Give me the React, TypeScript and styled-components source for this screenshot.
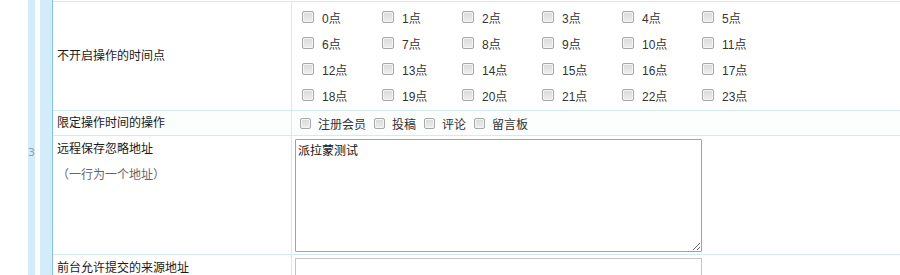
import styled, { createGlobalStyle } from "styled-components";

const GlobalStyle = createGlobalStyle`
	html, body {
		margin: 0;
		padding: 0;
		background: #fff;
	}
	body {
		font-family: "Liberation Sans", "Noto Sans CJK SC", sans-serif;
		font-size: 12px;
		color: #222;
	}
`;

const Page = styled.div`
	min-height: 100vh;
	padding-top: 1px;
	box-sizing: border-box;
	background: linear-gradient(
		to right,
		#fff 0 28px,
		#d3ecf9 28px 35px,
		#fff 35px 40px,
		#d3ecf9 40px 52px,
		#86c4e3 52px 53px,
		#fff 53px
	);
`;

const Table = styled.div`
	border-top: 1px solid #d3e9f3;
	margin-left: 53px;
`;

const Row = styled.div<{ $shade?: boolean; $height?: number }>`
	position: relative;
	display: grid;
	grid-template-columns: 239px 1fr;
	border-bottom: 1px solid #d3e9f3;
	background: ${(p) => (p.$shade ? "#fcfdfd" : "#fff")};
	${(p) => (p.$height ? `height: ${p.$height}px;` : "")}
`;

const LineNo = styled.span`
	position: absolute;
	left: -25px;
	top: 10px;
	font-size: 11px;
	color: #7ba6bd;
	font-family: "DejaVu Sans", sans-serif;
`;

const Label = styled.div<{ $top?: boolean }>`
	border-right: 1px solid #d3e9f3;
	padding: ${(p) => (p.$top ? "4px 4px" : "0 4px")};
	display: flex;
	flex-direction: column;
	justify-content: ${(p) => (p.$top ? "flex-start" : "center")};
	line-height: 18px;
	color: #1a1a1a;
`;

const Note = styled.span`
	color: #666;
	margin-top: 8px;
`;

const Field = styled.div<{ $pad?: string }>`
	padding: ${(p) => p.$pad || "3px 3px 2px"};
	display: flex;
	align-items: flex-start;
`;

const HourGrid = styled.div`
	display: grid;
	grid-template-columns: repeat(6, 80px);
	grid-auto-rows: 26px;
	padding: 2px 0 1px 10px;
`;

const Option = styled.label<{ $gap?: number }>`
	display: inline-flex;
	align-items: center;
	gap: ${(p) => p.$gap ?? 8}px;
	color: #333;
	white-space: nowrap;
`;

const Box = styled.input<{ $size?: number }>`
	appearance: none;
	margin: 0;
	width: ${(p) => p.$size ?? 12}px;
	height: ${(p) => p.$size ?? 12}px;
	border: 1px solid #a8a8a8;
	border-radius: 2px;
	background: linear-gradient(#d9d9d9, #eeeeee);
	box-shadow: inset 0 0 0 1px #f4f4f4;
	box-sizing: border-box;
`;

const Inline = styled.div`
	display: flex;
	align-items: center;
	gap: 8px;
	height: 24px;
	padding-left: 8px;
`;

const Area = styled.textarea`
	width: 407px;
	height: 113px;
	box-sizing: border-box;
	border: 1px solid #8ea3d2;
	border-radius: 1px;
	padding: 2px 2px;
	margin: 0;
	font-family: "Noto Sans CJK SC", sans-serif;
	font-size: 12px;
	line-height: 16px;
	color: #111;
	outline: none;
	resize: both;
`;

const Text = styled.input`
	width: 407px;
	height: 24px;
	box-sizing: border-box;
	border: 1px solid #c4c4c4;
	margin: 0;
	outline: none;
`;

const hours = Array.from({ length: 24 }, (_, i) => i);
const actions = ["注册会员", "投稿", "评论", "留言板"];

function App() {
	return (
		<Page>
			<GlobalStyle />
			<Table>
				<Row $height={108}>
					<Label>不开启操作的时间点</Label>
					<Field $pad="0">
						<HourGrid>
							{hours.map((h) => (
								<Option key={h}>
									<Box type="checkbox" />
									{h}点
								</Option>
							))}
						</HourGrid>
					</Field>
				</Row>
				<Row $shade>
					<Label>限定操作时间的操作</Label>
					<Inline>
						{actions.map((a) => (
							<Option key={a} $gap={7}>
								<Box type="checkbox" $size={11} />
								{a}
							</Option>
						))}
					</Inline>
				</Row>
				<Row>
					<LineNo>3</LineNo>
					<Label $top>
						<span>远程保存忽略地址</span>
						<Note>（一行为一个地址）</Note>
					</Label>
					<Field>
						<Area defaultValue="派拉蒙测试" />
					</Field>
				</Row>
				<Row>
					<Label $top>前台允许提交的来源地址</Label>
					<Field>
						<Text type="text" />
					</Field>
				</Row>
			</Table>
		</Page>
	);
}

export default App;
